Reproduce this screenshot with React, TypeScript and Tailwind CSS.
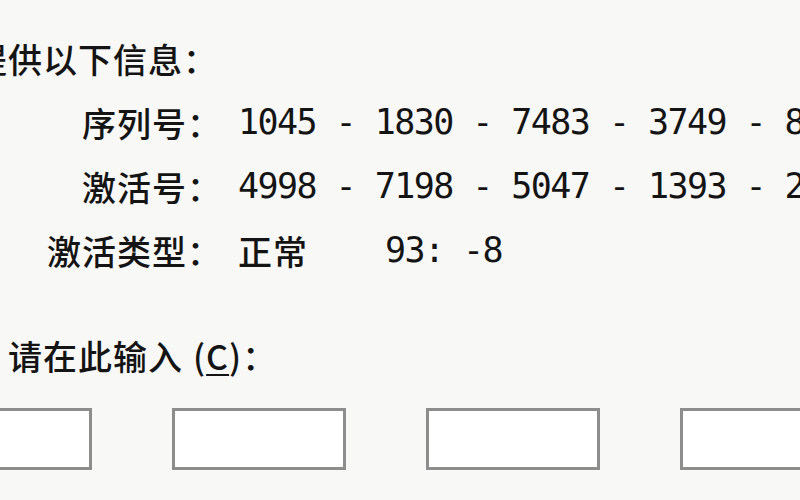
const cjk = "font-['Noto_Sans_CJK_SC',sans-serif]";
const mono = "font-['DejaVu_Sans_Mono','Noto_Sans_CJK_SC',monospace]";

const rows = [
  { label: "序列号：", value: "1045 - 1830 - 7483 - 3749 - 8" },
  { label: "激活号：", value: "4998 - 7198 - 5047 - 1393 - 2" },
];

function Label({ children }: { children: string }) {
  return (
    <span className={`${cjk} w-[222px] shrink-0 text-right text-[34px] font-medium tracking-[1px]`}>
      {children}
    </span>
  );
}

function Code({ children }: { children: string }) {
  return (
    <span className={`${mono} whitespace-pre text-[35px] tracking-[-1.55px]`}>
      {children}
    </span>
  );
}

export default function App() {
  return (
    <main className="h-[500px] w-[800px] overflow-hidden bg-[#f8f8f7] text-[#141414]">
      <div className="flex flex-col pt-[26px]">
        <div className="flex h-[64px] items-center">
          <span className={`${cjk} ml-[-27px] whitespace-nowrap text-[34px] font-medium tracking-[1px]`}>
            提供以下信息：
          </span>
        </div>

        {rows.map((row) => (
          <div className="flex h-[64px] items-center gap-[16px]" key={row.label}>
            <Label>{row.label}</Label>
            <Code>{row.value}</Code>
          </div>
        ))}

        <div className="flex h-[64px] items-center gap-[16px]">
          <Label>激活类型：</Label>
          <span className={`${cjk} w-[131px] shrink-0 text-[34px] font-medium tracking-[1px]`}>
            正常
          </span>
          <Code>93: -8</Code>
        </div>

        <div className="mt-[41px] flex h-[64px] items-center">
          <span className={`${cjk} ml-[8px] whitespace-nowrap text-[34px] font-medium tracking-[1px]`}>
            请在此输入
            <span className="ml-[10px]">
              (<span className="underline decoration-2 underline-offset-4">C</span>)
            </span>
            ：
          </span>
        </div>

        <div className="ml-[-82px] mt-[21px] flex gap-[80px]">
          {[0, 1, 2, 3].map((i) => (
            <div
              className="h-[62px] w-[174px] shrink-0 border-[3px] border-[#8d8d8d] bg-white"
              key={i}
            />
          ))}
        </div>
      </div>
    </main>
  );
}
